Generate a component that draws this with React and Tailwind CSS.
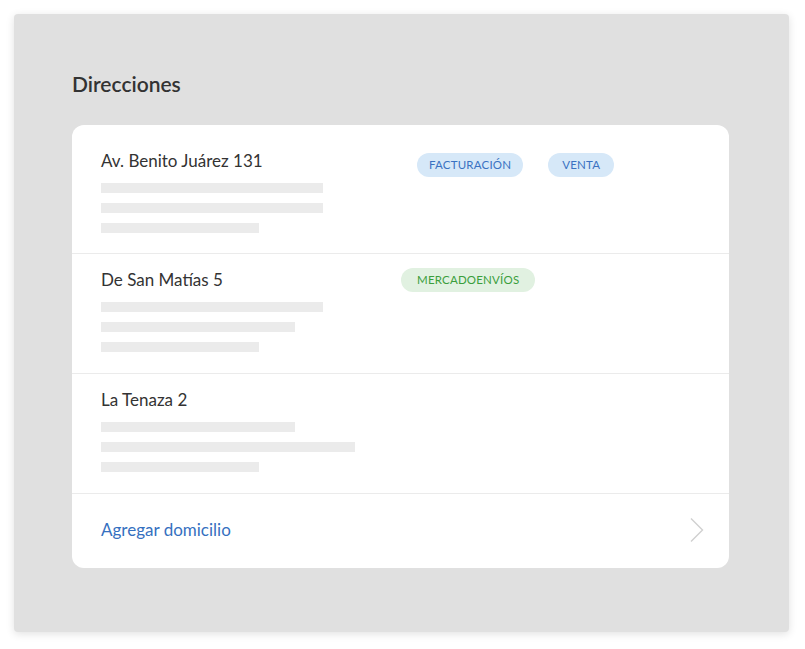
import React from 'react';

const addresses = [
  {
    name: 'Av. Benito Juárez 131',
    badgePos: 'left-[345px] top-[28px]',
    badges: [
      { label: 'FACTURACIÓN', tone: 'blue', pad: 'px-3' },
      { label: 'VENTA', tone: 'blue', pad: 'px-[14px]' },
    ],
    bars: ['w-[222px]', 'w-[222px]', 'w-[158px]'],
    height: 'h-[129px]',
    top: 'pt-[26px]',
  },
  {
    name: 'De San Matías 5',
    badgePos: 'left-[329px] top-[14px]',
    badges: [{ label: 'MERCADOENVÍOS', tone: 'green', pad: 'px-4' }],
    bars: ['w-[222px]', 'w-[194px]', 'w-[158px]'],
    height: 'h-[120px]',
    top: 'pt-[16px]',
  },
  {
    name: 'La Tenaza 2',
    badgePos: '',
    badges: [],
    bars: ['w-[194px]', 'w-[254px]', 'w-[158px]'],
    height: 'h-[120px]',
    top: 'pt-[16px]',
  },
];

const Badge = ({ label, tone, pad }) => (
  <span
    className={`inline-flex h-6 items-center rounded-full text-[11.5px] tracking-[0.2px] ${pad} ${
      tone === 'green' ? 'bg-[#e1f1e1] text-[#3a9e3c]' : 'bg-[#d6e8f8] text-[#3a72c2]'
    }`}
  >
    {label}
  </span>
);

const AddressRow = ({ address }) => (
  <div className={`relative border-b border-[#ebebeb] px-[29px] ${address.height} ${address.top}`}>
    <div className="text-[17px] leading-[20px] text-[#333]">{address.name}</div>
    <div className="mt-[12px] flex flex-col gap-[10px]">
      {address.bars.map((w, i) => (
        <div key={i} className={`h-[10px] bg-[#ebebeb] ${w}`} />
      ))}
    </div>
    {address.badges.length > 0 && (
      <div className={`absolute flex gap-[25px] ${address.badgePos}`}>
        {address.badges.map(b => (
          <Badge key={b.label} {...b} />
        ))}
      </div>
    )}
  </div>
);

export default function App() {
  return (
    <div className="min-h-[649px] bg-white p-[14px] pr-[16px]" style={{ fontFamily: 'Lato, "Noto Sans", sans-serif' }}>
      <div className="h-[618px] rounded-[4px] bg-[#e0e0e0] pl-[58px] pr-[60px] pt-[58px] shadow-[0_2px_8px_rgba(0,0,0,0.12)]">
        <h2 className="text-[21px] font-semibold leading-[24px] text-[#333]">Direcciones</h2>
        <div className="mt-[29px] overflow-hidden rounded-[12px] bg-white">
          {addresses.map(a => (
            <AddressRow key={a.name} address={a} />
          ))}
          <div className="flex h-[74px] items-center justify-between px-[29px] pb-[3px]">
            <span className="text-[17px] text-[#3570c0]">Agregar domicilio</span>
            <svg width="16" height="26" viewBox="0 0 16 26" fill="none" className="mr-[-5px]">
              <path d="M2 1.5 L13.5 13 L2 24.5" stroke="#d0d0d0" strokeWidth="1.4" />
            </svg>
          </div>
        </div>
      </div>
    </div>
  );
}
